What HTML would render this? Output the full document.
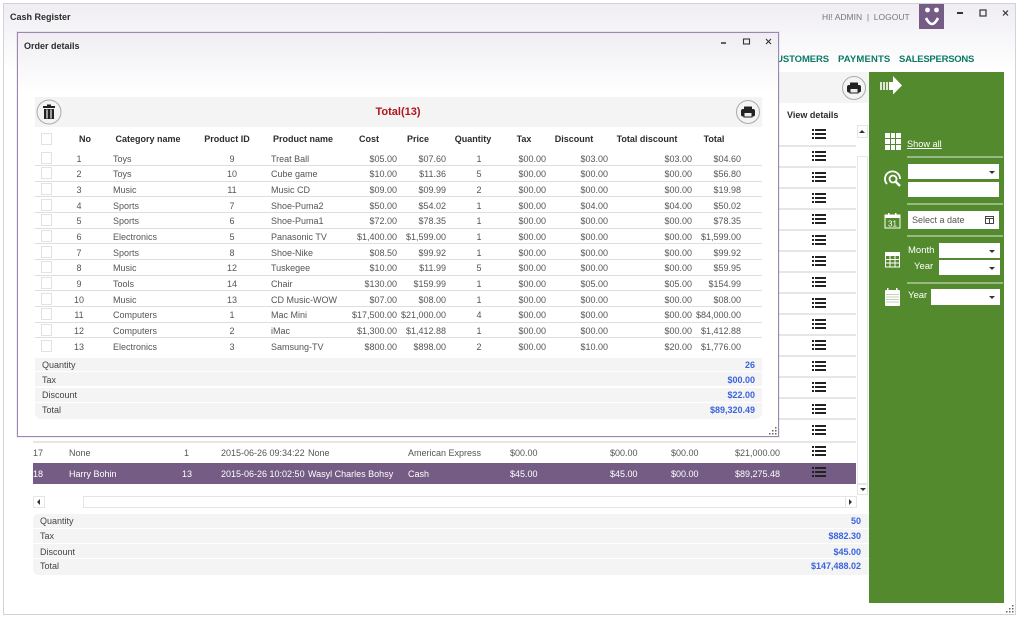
<!DOCTYPE html>
<html><head><meta charset="utf-8"><title>Cash Register</title>
<style>
html,body{margin:0;padding:0;width:1020px;height:619px;overflow:hidden;background:#fff;font-family:"Liberation Sans",sans-serif;font-size:9px;color:#555}
div,span,svg{position:absolute;box-sizing:border-box}
span{white-space:nowrap;line-height:12px}
#win{left:3px;top:3px;width:1013px;height:612px;border:1px solid #d3d1da;background:linear-gradient(#efedf2 0,#fff 66px,#fff 100%)}
.l{height:2px;background:#e6e6e6}
.r{left:0;width:1020px;height:14px}
.r span{top:1px}
.c1{left:74px;width:10px;text-align:center}
.c2{left:113px}
.c3{left:212px;width:40px;text-align:center}
.c4{left:271px}
.c5{left:337px;width:60px;text-align:right}
.c6{left:386px;width:60px;text-align:right}
.c7{left:469px;width:20px;text-align:center}
.c8{left:486px;width:60px;text-align:right}
.c9{left:548px;width:60px;text-align:right}
.c10{left:632px;width:60px;text-align:right}
.c11{left:681px;width:60px;text-align:right}
.h{font-weight:bold;color:#2c2c2c;top:133px;text-align:center}
.cb{left:41px;width:11px;height:12px;border:1px solid #e2e2e2;background:#fff}
.sep{left:35px;width:727px;height:1px;background:#dedede}
.s{background:#f4f4f4}
.sm{color:#444}
.v{font-weight:bold;color:#3b63e0;text-align:right}
.w{color:#fff}
.g{background:#fff;border:0}
.sl{background:rgba(255,255,255,.4);height:2px}
.tri{width:0;height:0;border-left:3px solid transparent;border-right:3px solid transparent;border-top:3px solid #333}
.nav{top:54px;font-size:9.500px;font-weight:bold;color:#0c7a68}
</style></head><body>
<div id="win"></div>
<span style="left:10px;top:11px;font-weight:bold;color:#2c2c2c">Cash Register</span>
<span style="left:822px;top:11px;font-size:8.500px;color:#777">HI! ADMIN&nbsp; |&nbsp; LOGOUT</span>
<div style="left:919px;top:4px;width:25px;height:25px;background:#755c84"></div>
<svg style="left:919px;top:4px" width="25" height="25"><circle cx="8.500" cy="6" r="2.400" fill="#fff"/><circle cx="17.500" cy="6" r="2.400" fill="#fff"/><path d="M7 14 Q13 26 19 14" fill="none" stroke="#fff" stroke-width="2.600"/></svg>
<svg style="left:950px;top:6px" width="62" height="14"><path d="M7 7h6" stroke="#333" stroke-width="2"/><rect x="30" y="4" width="6" height="6" fill="none" stroke="#333" stroke-width="1.200"/><path d="M53 4.500l5 5M58 4.500l-5 5" stroke="#333" stroke-width="1.200"/></svg>
<span class="nav" style="left:778px;width:51px;overflow:hidden;text-align:right;direction:rtl;letter-spacing:-.1px">CUSTOMERS</span>
<span class="nav" style="left:838px;letter-spacing:.15px">PAYMENTS</span>
<span class="nav" style="left:899px;letter-spacing:-.25px">SALESPERSONS</span>
<div style="left:778px;top:72px;width:91px;height:31px;background:#f4f4f4"></div>
<svg style="left:842px;top:76px" width="24" height="24"><circle cx="12" cy="12" r="11.500" fill="#f4f4f4" stroke="#aaa"/><rect x="8" y="6.500" width="8" height="3" rx=".5" fill="#222"/><rect x="5" y="9" width="14" height="7.500" rx="2" fill="#222"/><rect x="8" y="12.500" width="8" height="4.500" fill="#eee" stroke="#222"/></svg>
<span style="left:787px;top:109px;font-weight:bold;color:#2c2c2c">View details</span>
<svg style="left:812px;top:128px" width="14" height="360" fill="#222">
<defs><g id="li"><rect x="0" y="0" width="2" height="2"/><rect x="0" y="4" width="2" height="2"/><rect x="0" y="8" width="2" height="2"/><rect x="3" y="0" width="11" height="2"/><rect x="3" y="4" width="11" height="2"/><rect x="3" y="8" width="11" height="2"/></g></defs>
<use href="#li" y="1"/><use href="#li" y="23"/><use href="#li" y="44"/><use href="#li" y="65"/><use href="#li" y="86"/><use href="#li" y="107"/><use href="#li" y="128"/><use href="#li" y="149"/><use href="#li" y="170"/><use href="#li" y="191"/><use href="#li" y="212"/><use href="#li" y="233"/><use href="#li" y="254"/><use href="#li" y="276"/><use href="#li" y="297"/><use href="#li" y="318"/></svg>
<div class="l" style="left:778px;top:145px;width:78px"></div>
<div class="l" style="left:778px;top:166px;width:78px"></div>
<div class="l" style="left:778px;top:187px;width:78px"></div>
<div class="l" style="left:778px;top:208px;width:78px"></div>
<div class="l" style="left:778px;top:229px;width:78px"></div>
<div class="l" style="left:778px;top:250px;width:78px"></div>
<div class="l" style="left:778px;top:271px;width:78px"></div>
<div class="l" style="left:778px;top:292px;width:78px"></div>
<div class="l" style="left:778px;top:313px;width:78px"></div>
<div class="l" style="left:778px;top:334px;width:78px"></div>
<div class="l" style="left:778px;top:355px;width:78px"></div>
<div class="l" style="left:778px;top:376px;width:78px"></div>
<div class="l" style="left:778px;top:397px;width:78px"></div>
<div class="l" style="left:778px;top:418px;width:78px"></div>
<div class="l" style="left:33px;top:441px;width:823px"></div>
<div style="left:857px;top:125px;width:11px;height:13px;border:1px solid #e5e5e5;background:#fff"></div>
<div class="tri" style="left:859px;top:130px;border-top:0;border-bottom:3px solid #333"></div>
<div style="left:857px;top:156px;width:11px;height:328px;border:1px solid #e6e6e6;background:#fff"></div>
<div style="left:857px;top:484px;width:11px;height:11px;border:1px solid #e5e5e5;background:#fff"></div>
<div class="tri" style="left:860px;top:488px"></div>
<span style="left:33px;top:447px">17</span><span style="left:69px;top:447px">None</span><span style="left:184px;top:447px">1</span><span style="left:221px;top:447px">2015-06-26 09:34:22</span><span style="left:308px;top:447px">None</span><span style="left:408px;top:447px">American Express</span><span style="left:510px;top:447px">$00.00</span><span style="left:610px;top:447px">$00.00</span><span style="left:671px;top:447px">$00.00</span><span style="left:735px;top:447px">$21,000.00</span>
<div style="left:33px;top:463px;width:823px;height:21px;background:#755c84"></div>
<span class="w" style="left:33px;top:468px">18</span><span class="w" style="left:69px;top:468px">Harry Bohin</span><span class="w" style="left:182px;top:468px">13</span><span class="w" style="left:221px;top:468px">2015-06-26 10:02:50</span><span class="w" style="left:308px;top:468px">Wasyl Charles Bohsy</span><span class="w" style="left:408px;top:468px">Cash</span><span class="w" style="left:510px;top:468px">$45.00</span><span class="w" style="left:610px;top:468px">$45.00</span><span class="w" style="left:671px;top:468px">$00.00</span><span class="w" style="left:735px;top:468px">$89,275.48</span>
<svg style="left:812px;top:467px" width="14" height="11" fill="#222"><use href="#li"/></svg>
<div style="left:33px;top:496px;width:12px;height:12px;border:1px solid #e5e5e5;background:#fff"></div>
<svg style="left:37px;top:499px" width="4" height="6"><path d="M3 0v6L0 3z" fill="#333"/></svg>
<div style="left:83px;top:496px;width:774px;height:12px;border:1px solid #e5e5e5;background:#fff"></div>
<div style="left:845px;top:496px;width:1px;height:12px;background:#e5e5e5"></div>
<svg style="left:849px;top:499px" width="4" height="6"><path d="M0 0v6l3-3z" fill="#333"/></svg>
<div class="s" style="left:33px;top:514px;width:836px;height:14px;border-radius:5px 0 0 0"></div>
<div class="s" style="left:33px;top:529px;width:836px;height:14px"></div>
<div class="s" style="left:33px;top:544px;width:836px;height:14px"></div>
<div class="s" style="left:33px;top:559px;width:836px;height:16px;border-radius:0 0 0 5px"></div>
<span class="sm" style="left:40px;top:515px">Quantity</span><span class="sm" style="left:40px;top:530px">Tax</span><span class="sm" style="left:40px;top:546px">Discount</span><span class="sm" style="left:40px;top:560px">Total</span>
<span class="v" style="left:801px;top:515px;width:60px">50</span><span class="v" style="left:801px;top:530px;width:60px">$882.30</span><span class="v" style="left:801px;top:546px;width:60px">$45.00</span><span class="v" style="left:801px;top:560px;width:60px">$147,488.02</span>
<svg style="left:1006px;top:605px" width="9" height="9" fill="#666"><rect x="6" y="0" width="1.500" height="1.500"/><rect x="3" y="3" width="1.500" height="1.500"/><rect x="6" y="3" width="1.500" height="1.500"/><rect x="0" y="6" width="1.500" height="1.500"/><rect x="3" y="6" width="1.500" height="1.500"/><rect x="6" y="6" width="1.500" height="1.500"/></svg>
<div style="left:869px;top:72px;width:135px;height:531px;background:#548a2e"></div>
<svg style="left:879px;top:76px" width="24" height="20" fill="#fff"><rect x="1" y="6" width="2" height="8" opacity=".8"/><rect x="4" y="6" width="2" height="8" opacity=".8"/><rect x="7" y="6" width="2" height="8" opacity=".8"/><path d="M10 6h4V0l9 9.500-9 9V14h-4z"/></svg>
<svg style="left:884px;top:133px" width="18" height="18" fill="#fff"><rect x="1" y="0" width="5" height="5"/><rect x="7" y="0" width="4" height="5"/><rect x="12" y="0" width="5" height="5"/><rect x="1" y="6" width="5" height="5"/><rect x="7" y="6" width="4" height="5"/><rect x="12" y="6" width="5" height="5"/><rect x="1" y="12" width="5" height="5"/><rect x="7" y="12" width="4" height="5"/><rect x="12" y="12" width="5" height="5"/></svg>
<span class="w" style="left:907px;top:138px;text-decoration:underline;font-size:9.200px">Show all</span>
<div class="sl" style="left:907px;top:156px;width:96px"></div>
<svg style="left:884px;top:170px" width="18" height="19" fill="none" stroke="#fff"><path d="M3 14A7.500 7.500 0 1 1 16 9" stroke-width="1.800"/><circle cx="9" cy="9" r="3.500" stroke-width="1.800"/><path d="M11.500 11.500L16 16" stroke-width="2.400"/></svg>
<div class="g" style="left:908px;top:164px;width:91px;height:15px"></div>
<div class="tri" style="left:989px;top:171px"></div>
<div class="g" style="left:908px;top:182px;width:91px;height:15px"></div>
<div class="sl" style="left:907px;top:203px;width:96px"></div>
<svg style="left:884px;top:212px" width="17" height="17"><rect x="1" y="3" width="15" height="13" fill="none" stroke="#fff"/><rect x="1" y="3" width="15" height="3" fill="#fff"/><rect x="4" y="1" width="1.500" height="3" fill="#fff"/><rect x="11" y="1" width="1.500" height="3" fill="#fff"/><text x="8.500" y="14.500" font-size="8" fill="#fff" text-anchor="middle" font-family="Liberation Sans">31</text></svg>
<div class="g" style="left:908px;top:211px;width:91px;height:18px"></div>
<span style="left:912px;top:214px;color:#555">Select a date</span>
<svg style="left:984px;top:215px" width="11" height="10" fill="none" stroke="#444"><rect x="1.500" y="1.500" width="8" height="7"/><path d="M1 3.500h9M5.500 3.500v5"/></svg>
<div class="sl" style="left:907px;top:235px;width:96px"></div>
<svg style="left:885px;top:250px" width="16" height="18" fill="#fff"><rect x="0" y="2" width="15" height="3"/><path d="M0.500 5.500h14V17H0.500z" fill="none" stroke="#fff"/><path d="M5 6v11M10 6v11M0 9.500h15M0 13h15" stroke="#fff" fill="none"/></svg>
<span class="w" style="left:908px;top:245px;font-size:9.500px">Month</span>
<div class="g" style="left:939px;top:243px;width:61px;height:15px"></div><div class="tri" style="left:989px;top:250px"></div>
<span class="w" style="left:914px;top:261px;font-size:9.500px">Year</span>
<div class="g" style="left:939px;top:260px;width:61px;height:15px"></div><div class="tri" style="left:989px;top:267px"></div>
<div class="sl" style="left:907px;top:282px;width:96px"></div>
<svg style="left:885px;top:288px" width="16" height="18" fill="#fff"><rect x="0" y="2" width="15" height="16" rx="1"/><rect x="2" y="0" width="1.500" height="3"/><rect x="11" y="0" width="1.500" height="3"/><path d="M1 6.500h13M1 9h13M1 11.500h13M1 14h13" stroke="#548a2e" stroke-width=".6" opacity=".7"/></svg>
<span class="w" style="left:908px;top:290px;font-size:9.500px">Year</span>
<div class="g" style="left:931px;top:289px;width:69px;height:16px"></div><div class="tri" style="left:989px;top:296px"></div>
<div style="left:17px;top:32px;width:762px;height:405px;border:1px solid #9c87ae;box-shadow:0 0 0 1px rgba(160,140,180,.15);background:linear-gradient(#efedf2 0,#fff 60px,#fff 100%)"></div>
<span style="left:24px;top:40px;font-weight:bold;color:#2c2c2c">Order details</span>
<svg style="left:716px;top:35px" width="60" height="12"><path d="M5 8h5" stroke="#333" stroke-width="1.500"/><rect x="27.500" y="4" width="6" height="5" fill="none" stroke="#333" stroke-width="1.100"/><path d="M50 4l5 5M55 4l-5 5" stroke="#333" stroke-width="1.100"/></svg>
<div style="left:35px;top:97px;width:727px;height:30px;background:#f4f4f4"></div>
<svg style="left:36px;top:99px" width="26" height="26"><circle cx="13" cy="13" r="12" fill="#f4f4f4" stroke="#aaa"/><path d="M7 7h12v2H7zM11 5.500h4V7h-4zM8 10h10v10H8z" fill="#222"/><path d="M11 10.500v9M15 10.500v9" stroke="#f4f4f4" stroke-width="1.200"/></svg>
<svg style="left:736px;top:100px" width="24" height="24"><circle cx="12" cy="12" r="11.500" fill="#f4f4f4" stroke="#aaa"/><rect x="8" y="6.500" width="8" height="3" rx=".5" fill="#222"/><rect x="5" y="9" width="14" height="7.500" rx="2" fill="#222"/><rect x="8" y="12.500" width="8" height="4.500" fill="#eee" stroke="#222"/></svg>
<span style="left:348px;top:106px;width:100px;text-align:center;font-size:11px;font-weight:bold;color:#b3141c">Total(13)</span>
<div class="cb" style="top:133px"></div>
<span class="h" style="left:65px;width:40px">No</span>
<span class="h" style="left:108px;width:80px">Category name</span>
<span class="h" style="left:197px;width:60px">Product ID</span>
<span class="h" style="left:263px;width:80px">Product name</span>
<span class="h" style="left:349px;width:40px">Cost</span>
<span class="h" style="left:398px;width:40px">Price</span>
<span class="h" style="left:448px;width:50px">Quantity</span>
<span class="h" style="left:504px;width:40px">Tax</span>
<span class="h" style="left:544px;width:60px">Discount</span>
<span class="h" style="left:607px;width:80px">Total discount</span>
<span class="h" style="left:694px;width:40px">Total</span>

<div class="cb" style="top:152px"></div><div class="sep" style="top:165px"></div>
<div class="r" style="top:152px"><span class="c1">1</span><span class="c2">Toys</span><span class="c3">9</span><span class="c4">Treat Ball</span><span class="c5">$05.00</span><span class="c6">$07.60</span><span class="c7">1</span><span class="c8">$00.00</span><span class="c9">$03.00</span><span class="c10">$03.00</span><span class="c11">$04.60</span></div>
<div class="cb" style="top:167px"></div><div class="sep" style="top:181px"></div>
<div class="r" style="top:167px"><span class="c1">2</span><span class="c2">Toys</span><span class="c3">10</span><span class="c4">Cube game</span><span class="c5">$10.00</span><span class="c6">$11.36</span><span class="c7">5</span><span class="c8">$00.00</span><span class="c9">$00.00</span><span class="c10">$00.00</span><span class="c11">$56.80</span></div>
<div class="cb" style="top:183px"></div><div class="sep" style="top:196px"></div>
<div class="r" style="top:183px"><span class="c1">3</span><span class="c2">Music</span><span class="c3">11</span><span class="c4">Music CD</span><span class="c5">$09.00</span><span class="c6">$09.99</span><span class="c7">2</span><span class="c8">$00.00</span><span class="c9">$00.00</span><span class="c10">$00.00</span><span class="c11">$19.98</span></div>
<div class="cb" style="top:199px"></div><div class="sep" style="top:212px"></div>
<div class="r" style="top:199px"><span class="c1">4</span><span class="c2">Sports</span><span class="c3">7</span><span class="c4">Shoe-Puma2</span><span class="c5">$50.00</span><span class="c6">$54.02</span><span class="c7">1</span><span class="c8">$00.00</span><span class="c9">$04.00</span><span class="c10">$04.00</span><span class="c11">$50.02</span></div>
<div class="cb" style="top:214px"></div><div class="sep" style="top:228px"></div>
<div class="r" style="top:214px"><span class="c1">5</span><span class="c2">Sports</span><span class="c3">6</span><span class="c4">Shoe-Puma1</span><span class="c5">$72.00</span><span class="c6">$78.35</span><span class="c7">1</span><span class="c8">$00.00</span><span class="c9">$00.00</span><span class="c10">$00.00</span><span class="c11">$78.35</span></div>
<div class="cb" style="top:230px"></div><div class="sep" style="top:243px"></div>
<div class="r" style="top:230px"><span class="c1">6</span><span class="c2">Electronics</span><span class="c3">5</span><span class="c4">Panasonic TV</span><span class="c5">$1,400.00</span><span class="c6">$1,599.00</span><span class="c7">1</span><span class="c8">$00.00</span><span class="c9">$00.00</span><span class="c10">$00.00</span><span class="c11">$1,599.00</span></div>
<div class="cb" style="top:246px"></div><div class="sep" style="top:259px"></div>
<div class="r" style="top:246px"><span class="c1">7</span><span class="c2">Sports</span><span class="c3">8</span><span class="c4">Shoe-Nike</span><span class="c5">$08.50</span><span class="c6">$99.92</span><span class="c7">1</span><span class="c8">$00.00</span><span class="c9">$00.00</span><span class="c10">$00.00</span><span class="c11">$99.92</span></div>
<div class="cb" style="top:261px"></div><div class="sep" style="top:275px"></div>
<div class="r" style="top:261px"><span class="c1">8</span><span class="c2">Music</span><span class="c3">12</span><span class="c4">Tuskegee</span><span class="c5">$10.00</span><span class="c6">$11.99</span><span class="c7">5</span><span class="c8">$00.00</span><span class="c9">$00.00</span><span class="c10">$00.00</span><span class="c11">$59.95</span></div>
<div class="cb" style="top:277px"></div><div class="sep" style="top:290px"></div>
<div class="r" style="top:277px"><span class="c1">9</span><span class="c2">Tools</span><span class="c3">14</span><span class="c4">Chair</span><span class="c5">$130.00</span><span class="c6">$159.99</span><span class="c7">1</span><span class="c8">$00.00</span><span class="c9">$05.00</span><span class="c10">$05.00</span><span class="c11">$154.99</span></div>
<div class="cb" style="top:293px"></div><div class="sep" style="top:306px"></div>
<div class="r" style="top:293px"><span class="c1">10</span><span class="c2">Music</span><span class="c3">13</span><span class="c4">CD Music-WOW</span><span class="c5">$07.00</span><span class="c6">$08.00</span><span class="c7">1</span><span class="c8">$00.00</span><span class="c9">$00.00</span><span class="c10">$00.00</span><span class="c11">$08.00</span></div>
<div class="cb" style="top:308px"></div><div class="sep" style="top:322px"></div>
<div class="r" style="top:308px"><span class="c1">11</span><span class="c2">Computers</span><span class="c3">1</span><span class="c4">Mac Mini</span><span class="c5">$17,500.00</span><span class="c6">$21,000.00</span><span class="c7">4</span><span class="c8">$00.00</span><span class="c9">$00.00</span><span class="c10">$00.00</span><span class="c11">$84,000.00</span></div>
<div class="cb" style="top:324px"></div><div class="sep" style="top:337px"></div>
<div class="r" style="top:324px"><span class="c1">12</span><span class="c2">Computers</span><span class="c3">2</span><span class="c4">iMac</span><span class="c5">$1,300.00</span><span class="c6">$1,412.88</span><span class="c7">1</span><span class="c8">$00.00</span><span class="c9">$00.00</span><span class="c10">$00.00</span><span class="c11">$1,412.88</span></div>
<div class="cb" style="top:340px"></div>
<div class="r" style="top:340px"><span class="c1">13</span><span class="c2">Electronics</span><span class="c3">3</span><span class="c4">Samsung-TV</span><span class="c5">$800.00</span><span class="c6">$898.00</span><span class="c7">2</span><span class="c8">$00.00</span><span class="c9">$10.00</span><span class="c10">$20.00</span><span class="c11">$1,776.00</span></div>
<div class="s" style="left:35px;top:358px;width:727px;height:13px"></div>
<div class="s" style="left:35px;top:372px;width:727px;height:14px"></div>
<div class="s" style="left:35px;top:388px;width:727px;height:14px"></div>
<div class="s" style="left:35px;top:403px;width:727px;height:16px;border-radius:0 0 6px 6px"></div>
<span class="sm" style="left:42px;top:359px">Quantity</span><span class="sm" style="left:42px;top:374px">Tax</span><span class="sm" style="left:42px;top:389px">Discount</span><span class="sm" style="left:42px;top:404px">Total</span>
<span class="v" style="left:695px;top:359px;width:60px">26</span><span class="v" style="left:695px;top:374px;width:60px">$00.00</span><span class="v" style="left:695px;top:389px;width:60px">$22.00</span><span class="v" style="left:695px;top:404px;width:60px">$89,320.49</span>
<svg style="left:769px;top:427px" width="9" height="9" fill="#666"><rect x="6" y="0" width="1.500" height="1.500"/><rect x="3" y="3" width="1.500" height="1.500"/><rect x="6" y="3" width="1.500" height="1.500"/><rect x="0" y="6" width="1.500" height="1.500"/><rect x="3" y="6" width="1.500" height="1.500"/><rect x="6" y="6" width="1.500" height="1.500"/></svg>
</body></html>
